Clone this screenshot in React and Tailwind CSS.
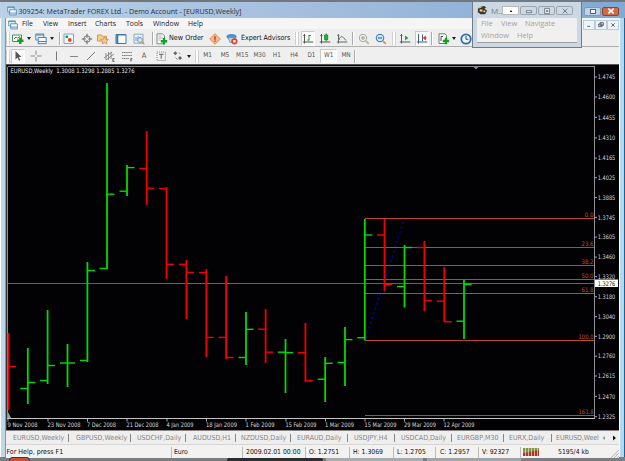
import React from "react";

const UP = "#00dc00";
const DOWN = "#f40000";
const FIB = "#d04e30";

const UI = "font-['DejaVu_Sans_Condensed','DejaVu_Sans',sans-serif]";
const SEGOE = "font-['Open_Sans','Noto_Sans',sans-serif]";

// x, high, low, open, close, colour
const BARS = [
  [8.5, 333, 410, null, 366.5, DOWN],
  [27.8, 348, 404, 388.5, 382.5, UP],
  [47.6, 310, 384, 380.5, 365.5, UP],
  [67.5, 344, 387, 363, 363, UP],
  [87.4, 262, 362, 360.5, 270.5, UP],
  [107, 83, 269, 268.5, 194.2, UP],
  [127, 165, 196, 191.2, 167.6, UP],
  [146.7, 131, 205, 168.4, 188.2, DOWN],
  [166.5, 187, 279, 188.6, 264.3, DOWN],
  [186.4, 260, 319, 264.3, 272.4, DOWN],
  [206.3, 269, 357, 272.5, 337.4, DOWN],
  [226.1, 276, 359, 337.4, 357.5, DOWN],
  [246, 312, 365, 357.5, 329.3, UP],
  [265.6, 309, 363, 329.2, 352.2, DOWN],
  [285.5, 339, 393, 352.2, 352.6, UP],
  [305.4, 323, 382, 352.6, 380.5, DOWN],
  [325.2, 357, 402, 379.2, 363.3, UP],
  [345, 327, 386, 362.5, 339.6, UP],
  [364.8, 219, 340.5, 337.7, 235, UP],
  [384.5, 219, 291, 235, 284.5, DOWN],
  [404.5, 245, 307.5, 286.5, 247.5, UP],
  [424.4, 241, 311, 247.5, 300.5, DOWN],
  [444.3, 267, 322, 301.2, 321.8, DOWN],
  [464, 280, 339, 321.2, 284.4, UP],
];

const FIBS = [
  ["0.0", 218.5, 9],
  ["23.6", 247.5, 12],
  ["38.2", 265.5, 12],
  ["50.0", 279.5, 12],
  ["61.8", 293.5, 12],
  ["100.0", 340.5, 15],
  ["161.8", 415.5, 15],
];

const PRICES = [
  ["1.4745", 77.3], ["1.4600", 97.3], ["1.4455", 117.6], ["1.4310", 138.2],
  ["1.4165", 158.4], ["1.4025", 178], ["1.3885", 197.8], ["1.3745", 217.6],
  ["1.3605", 237.4], ["1.3460", 257.4], ["1.3320", 277], ["1.3180", 297],
  ["1.3040", 317], ["1.2900", 336.6], ["1.2760", 356.5], ["1.2615", 376.3],
  ["1.2470", 396.6], ["1.2325", 417],
];

const DATES = [
  ["9 Nov 2008", 7.5, 30], ["23 Nov 2008", 47.5, 33], ["7 Dec 2008", 87, 29], ["21 Dec 2008", 126.5, 32],
  ["4 Jan 2009", 166.5, 27], ["18 Jan 2009", 206, 31], ["1 Feb 2009", 245.5, 29], ["15 Feb 2009", 285.5, 31],
  ["1 Mar 2009", 325, 29], ["15 Mar 2009", 364.5, 32], ["29 Mar 2009", 404, 32], ["12 Apr 2009", 443.5, 31],
];

function Chart() {
  return (
    <svg viewBox="6 64 613 367" className="block h-[367px] w-[613px] shrink-0" fontFamily="'DejaVu Sans Condensed','DejaVu Sans',sans-serif" fontSize="6.2">
      <rect x="6" y="64" width="613" height="367" fill="#020103" />
      <path d="M6 64.5H619" stroke="#555" />
      <path d="M6.5 65V430" stroke="#333" />
      <path d="M7.5 67V418M594.5 66V419M8 66.5H594" stroke="#8f8f93" fill="none" />
      <path d="M7 418.5H595" stroke="#c4c4c4" />
      <path d="M6 430.5H619" stroke="#8a8585" />
      <path d="M472.5 66h7l-3.5 3.5z" fill="#7f8c9b" />
      <path d="M8 412l3 6h-3z" fill="#9aa5af" />

      <path d="M8 283.5H594" stroke="#5d646e" />
      <path d="M366 338L404 220" stroke="#0000c4" strokeWidth="1.3" strokeDasharray="2 3" />
      {FIBS.map(([label, y, w]) => (
        <g key={label}>
          <path d={`M365 ${y}H594`} stroke="#bd472c" />
          <text x={593.5 - w} y={y - 1.2} textLength={w} lengthAdjust="spacingAndGlyphs" fill={FIB}>{label}</text>
        </g>
      ))}

      {BARS.map(([x, high, low, open, close, color]) => (
        <g key={x} stroke={color}>
          <path d={`M${x} ${high}V${low}`} strokeWidth="1.8" />
          {open && <path d={`M${x - 7.5} ${open}H${x}`} strokeWidth="1.4" />}
          <path d={`M${x} ${close}H${x + 7.5}`} strokeWidth="1.4" />
        </g>
      ))}

      {PRICES.map(([label, y]) => (
        <g key={label} fill="#dcdcdc">
          <path d={`M595 ${y - 0.3}h2`} stroke="#aaa" />
          <text x="597.8" y={y + 1.9} textLength="17.5" lengthAdjust="spacingAndGlyphs">{label}</text>
        </g>
      ))}
      <rect x="595" y="279.5" width="23" height="7.5" fill="#fff" />
      <text x="597.8" y="285.5" textLength="17.5" lengthAdjust="spacingAndGlyphs" fill="#111">1.3276</text>

      {DATES.map(([label, x, w]) => (
        <g key={label} fill="#dcdcdc">
          <path d={`M${x + 0.5} 419v2.5`} stroke="#aaa" />
          <text x={x} y="426.8" textLength={w} lengthAdjust="spacingAndGlyphs">{label}</text>
        </g>
      ))}
      <text x="10.5" y="73.2" textLength="124" lengthAdjust="spacingAndGlyphs" fill="#e6e6e6" className="whitespace-pre">
        {"EURUSD,Weekly  1.3008 1.3298 1.2885 1.3276"}
      </text>
    </svg>
  );
}

const Svg = ({ children, className = "size-[12px]" }) => (
  <svg viewBox="0 0 12 12" className={`block shrink-0 ${className}`} fill="none">{children}</svg>
);

const Plus = ({ x = 8, y = 8 }) => (
  <path d={`M${x} ${y - 3.2}v6.4M${x - 3.2} ${y}h6.4`} stroke="#12a026" strokeWidth="2.4" />
);

const ICONS = {
  newChart: <><path d="M.5 2h9v6.5h-9z" fill="#fff" stroke="#4f8c62" /><path d="M2 6l2-2 1.5 1L8 3.5" stroke="#3a9f50" /><Plus x={8.3} y={7.8} /></>,
  profiles: <><path d="M.8 1h8v6h-8z" fill="#e8f3fb" stroke="#5389b0" /><path d="M3.2 4.5h8v6.2h-8z" fill="#f7fbff" stroke="#4a83ad" /><path d="M.8 2h8M3.2 8.5h8" stroke="#4a83ad" /></>,
  market: <><path d="M1 1h9.5v9.5H1z" fill="#f7fbff" stroke="#7fa5c4" /><circle cx="3.8" cy="3.8" r="1.5" fill="#22a34a" /><circle cx="6.8" cy="7" r="1.9" fill="#e0452f" /></>,
  cross: <><circle cx="6" cy="6" r="3.2" stroke="#777" /><path d="M6 .8v4M6 7.2v4M.8 6h4M7.2 6h4" stroke="#666" /></>,
  folder: <><path d="M.5 2h4l1 1.3h4V8h-9z" fill="#f3cf86" stroke="#d59a55" /><path d="M7.5 3.8l1.2 2.4 2.7.3-2 1.8.6 2.7-2.5-1.3L5 11l.6-2.7-2-1.8 2.7-.3z" fill="#f9c99a" stroke="#d9825b" strokeWidth=".8" /></>,
  terminal: <><path d="M1 1.5h10v9H1z" fill="#f9fcff" stroke="#4579a8" /><path d="M2.3 1.5v9" stroke="#3f77ad" strokeWidth="2" /><path d="M1 2h10" stroke="#3f77ad" /></>,
  tester: <><path d="M1 1.2h9v9H1z" fill="#eaf4fb" stroke="#86a9c4" /><path d="M3 8V4m2 4V3m2 4V4" stroke="#739fc1" /><circle cx="7" cy="7" r="2.4" fill="#d8ebf8" stroke="#6f96b5" /><path d="M9 9l2.3 2.3" stroke="#d29b3b" strokeWidth="1.5" /></>,
  order: <><path d="M1 .8h5.5l2 2v8H1z" fill="#fbfbfb" stroke="#7d8c84" /><path d="M2.5 3h3M2.5 5h4M2.5 7h2" stroke="#8aa093" strokeWidth=".8" /><Plus x={8} y={8.3} /></>,
  meta: <><path d="M6 .7L11.3 6 6 11.3.7 6z" fill="#f2b98a" stroke="#d98f55" /><path d="M6 3.3v3.4M6 7.6v1.2" stroke="#b93c18" strokeWidth="1.4" /></>,
  expert: <><ellipse cx="5.5" cy="3.6" rx="5" ry="2.6" fill="#4d90cc" /><path d="M2 4.5h7l-1 5H4z" fill="#b8cfe2" stroke="#6389a8" strokeWidth=".7" /><circle cx="8.4" cy="8.3" r="3.1" fill="#e04127" /><path d="M7.2 7.1h2.4v2.4H7.2z" fill="#fff" /></>,
  bars: <><path d="M2.5 1v9.5M.8 9h10.5M1.3 2.5h2" stroke="#555" /><path d="M7 2v5.5M7 2.5h2M5.3 7H7" stroke="#1f9b3d" /></>,
  candles: <><path d="M2.5 1v9.5M.8 9h10.5M1.3 2.5h2" stroke="#555" /><path d="M7.2.5v8" stroke="#1f8b33" /><path d="M5.7 2h3v4.7h-3z" fill="#22b33c" stroke="#1f8b33" /></>,
  line: <><path d="M2.5 1v9.5M.8 9h10.5M1.3 2.5h2" stroke="#666" /><path d="M3 7c1.5-5 3.5-4 7 .5" stroke="#557a5d" /></>,
  zoomIn: <><circle cx="5" cy="5" r="3.7" fill="#f1f1ee" stroke="#a2a7a8" /><path d="M3 5h4M5 3v4" stroke="#999" /><path d="M7.8 7.8l3 3" stroke="#c9b48a" strokeWidth="1.8" /></>,
  zoomOut: <><circle cx="5" cy="5" r="3.7" fill="#d6ecfb" stroke="#4388bd" strokeWidth="1.2" /><path d="M3 5h4" stroke="#2c71a8" strokeWidth="1.2" /><path d="M7.8 7.8l3 3" stroke="#d39a3a" strokeWidth="1.8" /></>,
  scroll: <><path d="M2.5 1v9.5M.8 9h10.5M1.3 2.5h2" stroke="#556" /><path d="M6 2.5v5L9.5 5z" fill="#25a545" /></>,
  shift: <><path d="M2.5 1v9.5M.8 9h10.5M6.5 1.5V8" stroke="#3d6178" /><path d="M11 5H8M9.5 3v4L7.3 5z" stroke="#d3442a" fill="#d3442a" strokeWidth=".8" /></>,
  indicator: <><path d="M1 .8h6l1.5 1.7v8H1z" fill="#fbfbfb" stroke="#68806f" /><path d="M3 8V3.5h2" stroke="#555" /><Plus x={8} y={8} /></>,
  clock: <><circle cx="6" cy="6" r="4.7" fill="#e9f4fc" stroke="#2f6ca8" strokeWidth="1.8" /><path d="M6 3v3.3h2.3" stroke="#444" /></>,
  cursor: <path d="M3.5 1v8.5l2-2 1.5 3.3 1.3-.6L6.8 7H9.5z" fill="#555" />,
  thinCross: <path d="M6 .5v4.3M6 7v4.5M.5 6h4.3M7 6h4.5" stroke="#888" />,
  vline: <path d="M6.5 1.5v9" stroke="#777" />,
  hline: <path d="M2 6.5h8" stroke="#888" />,
  trend: <path d="M2 10l8-8" stroke="#777" />,
  channel: <><path d="M1 8l8-6M3 10l8-6M3 3v7M5.5 2v8M8 2v7" stroke="#777" strokeWidth=".8" /><path d="M11.5 8.5H9.8v3h1.7M9.8 10h1.4" stroke="#555" strokeWidth=".8" /></>,
  fibo: <><path d="M1 2.5h10M1 5.5h10M1 8.5h7" stroke="#777" strokeDasharray="1.5 .6" /><path d="M11.5 8.5H9.8v3M9.8 10h1.4" stroke="#555" strokeWidth=".8" /></>,
  label: <><path d="M2 2h8.5v8.5H2z" stroke="#888" strokeDasharray="1 1" /><path d="M4 4.3h4.5M6.2 4.3v4.5" stroke="#666" /></>,
  arrows: <><path d="M1.3 3.3L3.3 1.3 5.3 3.3 3.3 5.3zM6 8L8 6 10 8 8 10z" fill="#666" /><path d="M3.5 7.5l2 2M7 2.5l1.5 1.5" stroke="#888" /></>,
};

const Cell = ({ icon, className = "" }) => (
  <div className={`flex h-[15px] w-[14px] shrink-0 items-center justify-center ${className}`}>
    <Svg>{ICONS[icon]}</Svg>
  </div>
);
const Caret = ({ className = "" }) => (
  <div className={`flex w-[5px] shrink-0 justify-center ${className}`}>
    <svg viewBox="0 0 4 3" className="h-[3px] w-[4px]"><path d="M0 0h4L2 3z" fill="#222" /></svg>
  </div>
);
const Grip = ({ className = "" }) => (
  <div className={`h-[13px] w-[4px] shrink-0 border-x border-[#cfcfcf] bg-white ${className}`} />
);
const Sep = ({ className = "" }) => (
  <div className={`h-[13px] w-[2px] shrink-0 border-l border-[#aaa] bg-white ${className}`} />
);
const PRESSED = "border border-[#cacaca] border-r-white border-b-white bg-[#fafafa]";

function MainToolbar() {
  return (
    <div className="flex h-[18px] items-center border-b border-[#aeaeae] bg-[#efeeee] pt-[2px]">
      <Grip />
      <Cell icon="newChart" className="ml-px" />
      <Caret className="ml-px" />
      <Cell icon="profiles" className="ml-[3px]" />
      <Caret className="ml-px" />
      <Sep className="ml-[5px]" />
      <Cell icon="market" className="ml-px" />
      <Cell icon="cross" className="ml-1" />
      <Cell icon="folder" className="ml-0.5" />
      <Cell icon="terminal" className="ml-1" />
      <Cell icon="tester" className="ml-1" />
      <Sep className="ml-1.5" />
      <Cell icon="order" className="ml-px" />
      <span className="w-[36px] shrink-0 whitespace-nowrap text-[7.2px] text-[#111]">New Order</span>
      <Cell icon="meta" className="ml-[3px]" />
      <Cell icon="expert" className="ml-[3px]" />
      <span className="ml-0.5 w-[48px] shrink-0 whitespace-nowrap text-[7.1px] tracking-[-0.05px] text-[#111]">Expert Advisors</span>
      <Grip className="ml-1.5" />
      <Cell icon="bars" className={`ml-0.5 ${PRESSED}`} />
      <Cell icon="candles" className="ml-[3px]" />
      <Cell icon="line" className="ml-[3px]" />
      <Sep className="ml-[3px]" />
      <Cell icon="zoomIn" className="ml-[3px]" />
      <Cell icon="zoomOut" className="ml-[3px]" />
      <Grip className="ml-1" />
      <Cell icon="scroll" className="ml-0.5" />
      <Cell icon="shift" className={`ml-[3px] ${PRESSED}`} />
      <Sep className="ml-0.5" />
      <Cell icon="indicator" className="ml-1" />
      <Caret />
      <Cell icon="clock" className="ml-[3px]" />
    </div>
  );
}

const PERIODS = ["M1", "M5", "M15", "M30", "H1", "H4", "D1", "W1", "MN"];

function LineToolbar() {
  return (
    <div className="flex h-[17px] items-center bg-[#f0efef] pt-px">
      <Grip />
      <Cell icon="cursor" className={`ml-px ${PRESSED}`} />
      <Cell icon="thinCross" className="ml-1" />
      <Cell icon="vline" className="ml-1.5" />
      <Cell icon="hline" className="ml-1" />
      <Cell icon="trend" className="ml-[3px]" />
      <Cell icon="channel" className="ml-1" />
      <Cell icon="fibo" className="ml-1" />
      <span className="ml-[3px] w-[14px] shrink-0 text-center text-[7.5px] text-[#555]">A</span>
      <Cell icon="label" className="ml-[3px]" />
      <Cell icon="arrows" className="ml-[3px]" />
      <Caret className="ml-px" />
      <Grip className="ml-1" />
      <div className="flex">
        {PERIODS.map((p) => (
          <div
            key={p}
            className={`flex h-[14px] w-[17.3px] items-center justify-center text-[6.4px] text-[#555] ${p === "W1" ? PRESSED : ""}`}
          >
            {p}
          </div>
        ))}
      </div>
      <Sep className="-ml-px" />
    </div>
  );
}

function MenuBar() {
  return (
    <div className={`flex h-[11px] items-center bg-[#f5f5f5] pt-[2px] text-[6.9px] text-[#222] ${SEGOE}`}>
      <Svg className="ml-0.5 size-[10px]">{ICONS.profiles}</Svg>
      <span className="ml-1 w-[21px]">File</span>
      <span className="w-[25px]">View</span>
      <span className="w-[27px]">Insert</span>
      <span className="w-[31px]">Charts</span>
      <span className="w-[27px]">Tools</span>
      <span className="w-[35px]">Window</span>
      <span>Help</span>
      <div className="ml-auto flex">
        {["M3.5 8h4", "M4.5 2.5h5v4h-5zM2.5 4.5h5v4h-5z", "M3.5 3.5l5 5M8.5 3.5l-5 5"].map((d) => (
          <div key={d} className="flex h-[10px] w-[12px] items-center justify-center border border-[#b9cbdc] bg-[#edf4fb]">
            <Svg className="size-[8px]"><path d={d} stroke="#4a5b70" strokeWidth="1.4" /></Svg>
          </div>
        ))}
      </div>
    </div>
  );
}

function TitleBar() {
  return (
    <div className={`flex h-[18px] items-center border-t-2 border-[#72777d] bg-linear-to-r from-[#b9d0e6] via-[#a3bedc] to-[#81a9d4] pt-[2px] text-[7.1px] text-[#26303c] ${SEGOE}`}>
      <Svg className="ml-[7px] size-[10px]">{ICONS.profiles}</Svg>
      <span className="ml-[1.5px] whitespace-nowrap">309254: MetaTrader FOREX Ltd. - Demo Account - [EURUSD,Weekly]</span>
      <div className="mr-[6px] ml-auto flex gap-px">
        <div className="flex h-[9px] w-[17px] items-center justify-center rounded-xs border border-[#8299b3] bg-[#bcd3ea]">
          <div className="h-[5px] w-[6px] border border-[#4c6279] bg-white" />
        </div>
        <div className="flex h-[9px] w-[17px] items-center justify-center rounded-xs border border-[#7e4a3a] bg-[#cf6a45]">
          <Svg className="size-[8px]"><path d="M2 2.5l8 7M10 2.5l-8 7" stroke="#fff" strokeWidth="2.4" /></Svg>
        </div>
      </div>
    </div>
  );
}

function FloatingWindow() {
  return (
    <div className={`absolute top-0 left-[472px] flex h-[48px] w-[110px] flex-col border border-t-2 border-[#6f7b86] bg-[#cbd7e3] px-1 text-[7.4px] text-[#a3a3a3] ${SEGOE}`}>
      <div className="flex h-[16px] items-center pt-px">
        <Svg className="size-[11px]">
          <path d="M1 4l3-2 4-1 2 2-2 1 3 2-2 4H4L1 8z" fill="#3b3529" />
          <path d="M3 5h3v2H3zM7 6h2v2H7z" fill="#f3dc8f" />
          <path d="M2 3l3-1" stroke="#e9b843" strokeWidth="1.5" />
        </Svg>
        <span className="ml-[3px] w-[11px] text-[8px] text-[#6d7984]">M..</span>
        <div className="flex h-[9px] w-[17px] items-center justify-center border border-[#b9b9b9] bg-white">
          <svg viewBox="0 0 4 3" className="h-[2px] w-[4px]"><path d="M2 0l2 3H0z" fill="#111" /></svg>
        </div>
        {["M2 5.5h8v3H2z", "M2.5 2h7v8h-7zM5 5h2v2H5z", "M2.5 2.5l7 7M9.5 2.5l-7 7"].map((d) => (
          <div key={d} className="ml-px flex h-[9px] w-[17px] items-center justify-center rounded-xs border border-[#98a4af] bg-[#cfd9e2]">
            <Svg className="size-[8px]"><path d={d} stroke="#6a747e" strokeWidth="1.4" fill="#f4f6f8" /></Svg>
          </div>
        ))}
      </div>
      <div className="h-[25px] border-b border-[#9e9e9e] bg-[#f0f0f0] pl-1 leading-[11.5px]">
        <div className="flex">
          <span className="w-[20px]">File</span>
          <span className="w-[24px]">View</span>
          <span>Navigate</span>
        </div>
        <div className="flex">
          <span className="w-[36px]">Window</span>
          <span>Help</span>
        </div>
      </div>
    </div>
  );
}

function ChartTabs() {
  return (
    <div className="flex h-[13px] items-center bg-[#efeeee] text-[7px] leading-[8px] whitespace-nowrap text-[#858585]">
      <span className="w-[62px] pl-[7px]">EURUSD,Weekly</span>
      <span className="w-[62px] border-l border-[#888] pl-[7px]">GBPUSD,Weekly</span>
      <span className="w-[55px] border-l border-[#888] pl-[6px]">USDCHF,Daily</span>
      <span className="w-[50px] border-l border-[#888] pl-[7px]">AUDUSD,H1</span>
      <span className="w-[55px] border-l border-[#888] pl-[5px]">NZDUSD,Daily</span>
      <span className="w-[57px] border-l border-[#888] pl-[6px]">EURAUD,Daily</span>
      <span className="w-[47px] border-l border-[#888] pl-[6px]">USDJPY,H4</span>
      <span className="w-[57px] border-l border-[#888] pl-[6px]">USDCAD,Daily</span>
      <span className="w-[52px] border-l border-[#888] pl-[5px]">EURGBP,M30</span>
      <span className="w-[48px] border-l border-[#888] pl-[5px]">EURX,Daily</span>
      <span className="w-[48px] border-l border-[#888] pl-[4px] tracking-[-0.1px]">EURUSD,Weel</span>
      <svg viewBox="0 0 20 8" className="h-[8px] w-[20px] shrink-0">
        <path d="M6 2v4L3.5 4z" fill="#999" />
        <path d="M14 1.5v5L17 4z" fill="#111" />
      </svg>
    </div>
  );
}

function StatusBar() {
  return (
    <div className="flex h-[14px] items-center border-t border-[#d5d5d5] bg-[#f3f2f1] pt-px text-[6.8px] leading-[11px] whitespace-nowrap text-[#111]">
      <span className="w-[165px] pl-[0.5px] text-[7px]">For Help, press F1</span>
      <span className="w-[71px] border-l border-[#bbb] pl-[2px]">Euro</span>
      <span className="w-[63px] border-l border-[#bbb] pl-[3px]">2009.02.01 00:00</span>
      <span className="w-[44px] border-l border-[#bbb] pl-[3px]">O: 1.2751</span>
      <span className="w-[44px] border-l border-[#bbb] pl-[3px]">H: 1.3069</span>
      <span className="w-[42px] border-l border-[#bbb] pl-[3px]">L: 1.2705</span>
      <span className="w-[43px] border-l border-[#bbb] pl-[4px]">C: 1.2957</span>
      <span className="w-[42px] border-l border-[#bbb] pl-[3px]">V: 92327</span>
      <div className="flex h-[11px] w-[21px] items-center border-l border-[#bbb] pl-[2px]">
        <svg viewBox="0 0 16 8" className="h-[8px] w-[16px]">
          <path d="M0 0h16v4L0 5z" fill="#7d9a45" />
          <path d="M0 5l16-3v6H0z" fill="#a8372c" />
          <path d="M2.5 0v8M5.5 0v8M8.5 0v8M11.5 0v8M14.5 0v8" stroke="#e8e2d2" strokeWidth=".7" />
        </svg>
      </div>
      <span className="w-[65px] text-center">5195/4 kb</span>
      <svg viewBox="0 0 12 12" className="mt-[2px] ml-auto h-[9px] w-[9px]">
        <path d="M1 12L12 1M5 12l7-7M9 12l3-3" stroke="#999" fill="none" />
      </svg>
    </div>
  );
}

function Taskbar() {
  return (
    <div className="flex h-[4px] bg-[#7c7f82]">
      <div className="ml-[9px] h-[4px] w-[21px] rounded-t-full border border-b-0 border-[#263a59] bg-[#c1553a]" />
      <div className="ml-[197px] mt-px h-[3px] w-[96px] rounded-t-xs bg-[#2c2d30]" />
      <div className="ml-[3px] mt-px h-[3px] w-[97px] bg-[#a9acae]" />
      <div className="ml-1 mt-px h-[3px] w-[94px] bg-[#a3a6a8]" />
    </div>
  );
}

export default function App() {
  return (
    <div className={`relative h-[461px] w-[625px] overflow-hidden bg-[#f0efef] ${UI}`}>
      <TitleBar />
      <div className="flex h-[439px]">
        <div className="w-[6px] shrink-0 border-r border-l border-r-[#8b9298] border-l-white bg-[#bfd8e8]" />
        <div className="w-[613px] shrink-0">
          <MenuBar />
          <MainToolbar />
          <LineToolbar />
          <Chart />
          <ChartTabs />
          <StatusBar />
        </div>
        <div className="w-[6px] shrink-0 border-r border-l border-r-[#1f5f98] border-l-white bg-[#b5d8ea]" />
      </div>
      <Taskbar />
      <FloatingWindow />
    </div>
  );
}
